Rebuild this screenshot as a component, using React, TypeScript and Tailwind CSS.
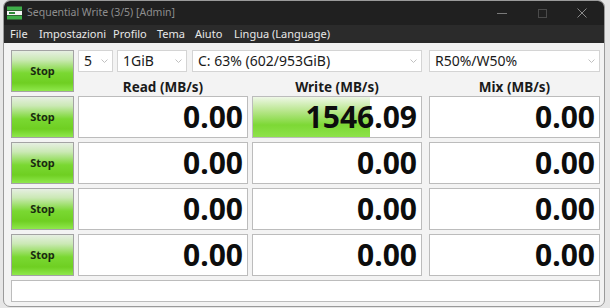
import React from 'react';

const ui = { fontFamily: '"Segoe UI", "Noto Sans", "Open Sans", sans-serif' };

const rows = [
  { read: '0.00', write: '1546.09', mix: '0.00', bar: 117 },
  { read: '0.00', write: '0.00', mix: '0.00', bar: 0 },
  { read: '0.00', write: '0.00', mix: '0.00', bar: 0 },
  { read: '0.00', write: '0.00', mix: '0.00', bar: 0 },
];

export default function App() {
  return (
    <div className="w-[610px] h-[308px] bg-[#e6e6e6] overflow-hidden" style={ui}>
      <div className="ml-[3px] w-[602px] h-[307px] rounded-[7px] overflow-hidden bg-[#f3f3f3] border border-[#9a9a9a] flex flex-col">
        {/* title bar */}
        <div className="h-[24px] bg-[#202020] flex items-center shrink-0">
          <AppIcon />
          <span className="ml-[5px] text-[10.5px] text-[#8e8e8e]">Sequential Write (3/5) [Admin]</span>
          <div className="ml-auto flex items-center">
            <div className="w-[40px] flex justify-center">
              <div className="w-[10px] h-px bg-[#7a7a7a]" />
            </div>
            <div className="w-[40px] flex justify-center">
              <div className="w-[9px] h-[9px] border border-[#4a4a4a]" />
            </div>
            <div className="w-[40px] flex justify-center mr-[2px]">
              <svg width="10" height="10" viewBox="0 0 10 10">
                <path d="M0.5 0.5 L9.5 9.5 M9.5 0.5 L0.5 9.5" stroke="#8a8a8a" strokeWidth="1" />
              </svg>
            </div>
          </div>
        </div>

        {/* menu bar */}
        <div className="h-[18px] bg-[#2b2b2b] flex items-center text-[11px] text-[#e8e8e8] shrink-0 pl-[6px]">
          <span className="w-[29px]">File</span>
          <span className="w-[74px]">Impostazioni</span>
          <span className="w-[44px]">Profilo</span>
          <span className="w-[38px]">Tema</span>
          <span className="w-[39px]">Aiuto</span>
          <span>Lingua (Language)</span>
        </div>

        {/* content */}
        <div className="flex flex-col pl-[7px] pt-[7px]">
          <div className="flex items-start gap-[4px]">
            <StopButton />
            <div className="flex flex-col">
              <div className="flex h-[22px]">
                <Combo label="5" w="w-[35px]" />
                <Combo label="1GiB" w="w-[70px] ml-[4px]" />
                <Combo label="C: 63% (602/953GiB)" w="w-[230px] ml-[5px]" />
                <Combo label="R50%/W50%" w="w-[171px] ml-[7px]" />
              </div>
              <div className="flex h-[24px] items-end text-[13.5px] font-bold text-[#1a1a1a] leading-[18px]">
                <div className="w-[170px] text-center">Read (MB/s)</div>
                <div className="w-[170px] ml-[4px] text-center">Write (MB/s)</div>
                <div className="w-[171px] ml-[7px] text-center">Mix (MB/s)</div>
              </div>
            </div>
          </div>

          {rows.map((r, i) => (
            <div key={i} className={`flex gap-[4px] ${i === 0 ? '' : 'mt-[4px]'}`}>
              <StopButton />
              <Cell value={r.read} w="w-[170px]" />
              <Cell value={r.write} w="w-[170px]" bar={r.bar} />
              <Cell value={r.mix} w="w-[171px] ml-[3px]" />
            </div>
          ))}

          <div className="mt-[4px] w-[589px] h-[22px] bg-white border border-[#bcbcbc]" />
        </div>
      </div>
    </div>
  );
}

function AppIcon() {
  return (
    <svg width="15" height="14" viewBox="0 0 15 14" className="ml-[3px]">
      <rect x="0" y="0.5" width="15" height="4" fill="#3fae49" />
      <rect x="0" y="5" width="15" height="4" fill="#f4f4f4" />
      <rect x="0" y="9.5" width="15" height="4" fill="#3fae49" />
      <rect x="2" y="6" width="6" height="2" fill="#2e8b38" />
    </svg>
  );
}

function StopButton() {
  return (
    <div className="w-[63px] h-[42px] shrink-0 border border-[#a3a3a3] bg-[linear-gradient(to_bottom,#e6efe2_0%,#cbe9b5_22%,#7ad832_55%,#6fcf22_80%,#8fe84c_100%)] flex items-center justify-center">
      <span className="text-[11px] font-bold text-[#1a2a10]">Stop</span>
    </div>
  );
}

function Combo({ label, w }: { label: string; w: string }) {
  return (
    <div className={`${w} h-[22px] bg-white border border-[#d4d4d4] flex items-center pl-[5px] pr-[4px] shrink-0`}>
      <span className="text-[14px] text-[#1a1a1a] leading-none">{label}</span>
      <svg width="7" height="4" viewBox="0 0 7 4" className="ml-auto">
        <path d="M0.5 0.5 L3.5 3.5 L6.5 0.5" fill="none" stroke="#c0c0c0" strokeWidth="1" />
      </svg>
    </div>
  );
}

function Cell({ value, w, bar = 0 }: { value: string; w: string; bar?: number }) {
  return (
    <div className={`${w} h-[42px] bg-white border border-[#bcbcbc] relative shrink-0 overflow-hidden`}>
      {bar > 0 && (
        <div
          className="absolute left-0 top-0 bottom-0 bg-[linear-gradient(to_bottom,#eef7e6_0%,#b8e68c_35%,#7dd835_70%,#8ee24a_100%)]"
          style={{ width: bar }}
        />
      )}
      <div className="relative h-full flex items-center justify-end pr-[4px] text-[30px] font-bold text-[#0d0d0d] leading-none">
        {value}
      </div>
    </div>
  );
}
